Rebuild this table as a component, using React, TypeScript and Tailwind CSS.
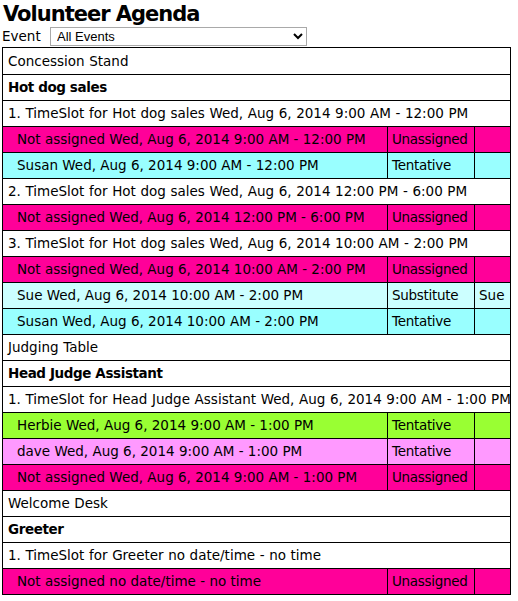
import React from "react";

type Row =
  | { kind: "event"; text: string }
  | { kind: "role"; text: string }
  | { kind: "slot"; text: string }
  | { kind: "assign"; text: string; status: string; sub?: string; bg: string };

const rows: Row[] = [
  { kind: "event", text: "Concession Stand" },
  { kind: "role", text: "Hot dog sales" },
  { kind: "slot", text: "1. TimeSlot for Hot dog sales Wed, Aug 6, 2014 9:00 AM - 12:00 PM" },
  { kind: "assign", text: "Not assigned Wed, Aug 6, 2014 9:00 AM - 12:00 PM", status: "Unassigned", bg: "bg-[#ff0099]" },
  { kind: "assign", text: "Susan Wed, Aug 6, 2014 9:00 AM - 12:00 PM", status: "Tentative", bg: "bg-[#99ffff]" },
  { kind: "slot", text: "2. TimeSlot for Hot dog sales Wed, Aug 6, 2014 12:00 PM - 6:00 PM" },
  { kind: "assign", text: "Not assigned Wed, Aug 6, 2014 12:00 PM - 6:00 PM", status: "Unassigned", bg: "bg-[#ff0099]" },
  { kind: "slot", text: "3. TimeSlot for Hot dog sales Wed, Aug 6, 2014 10:00 AM - 2:00 PM" },
  { kind: "assign", text: "Not assigned Wed, Aug 6, 2014 10:00 AM - 2:00 PM", status: "Unassigned", bg: "bg-[#ff0099]" },
  { kind: "assign", text: "Sue Wed, Aug 6, 2014 10:00 AM - 2:00 PM", status: "Substitute", sub: "Sue", bg: "bg-[#ccffff]" },
  { kind: "assign", text: "Susan Wed, Aug 6, 2014 10:00 AM - 2:00 PM", status: "Tentative", bg: "bg-[#99ffff]" },
  { kind: "event", text: "Judging Table" },
  { kind: "role", text: "Head Judge Assistant" },
  { kind: "slot", text: "1. TimeSlot for Head Judge Assistant Wed, Aug 6, 2014 9:00 AM - 1:00 PM" },
  { kind: "assign", text: "Herbie Wed, Aug 6, 2014 9:00 AM - 1:00 PM", status: "Tentative", bg: "bg-[#99ff33]" },
  { kind: "assign", text: "dave Wed, Aug 6, 2014 9:00 AM - 1:00 PM", status: "Tentative", bg: "bg-[#ff99ff]" },
  { kind: "assign", text: "Not assigned Wed, Aug 6, 2014 9:00 AM - 1:00 PM", status: "Unassigned", bg: "bg-[#ff0099]" },
  { kind: "event", text: "Welcome Desk" },
  { kind: "role", text: "Greeter" },
  { kind: "slot", text: "1. TimeSlot for Greeter no date/time - no time" },
  { kind: "assign", text: "Not assigned no date/time - no time", status: "Unassigned", bg: "bg-[#ff0099]" },
];

function AgendaRow({ row, first }: { row: Row; first: boolean }) {
  const top = first ? "" : "border-t border-black";
  if (row.kind === "assign") {
    return (
      <div className={`flex h-[26px] ${top} ${row.bg}`}>
        <div className="w-[384px] pl-[14px] flex items-center whitespace-nowrap">{row.text}</div>
        <div className="w-[87px] border-l border-black pl-[4px] flex items-center text-[13.5px] tracking-[-0.3px]">{row.status}</div>
        <div className="flex-1 border-l border-black pl-[4px] flex items-center">{row.sub ?? ""}</div>
      </div>
    );
  }
  return (
    <div
      className={`h-[26px] pl-[5px] flex items-center bg-white whitespace-nowrap ${top} ${
        row.kind === "role" ? "font-bold text-[13.5px] tracking-[-0.4px]" : "[word-spacing:0.3px]"
      }`}
    >
      {row.text}
    </div>
  );
}

export default function App() {
  return (
    <div className="bg-white min-h-[601px] text-[13.5px] text-black font-['DejaVu_Sans',Verdana,sans-serif] pt-[1px]">
      <h1 className="pl-[3px] text-[21px] tracking-[-1px] font-bold leading-[26px]">Volunteer Agenda</h1>
      <div className="flex items-center h-[19px] pl-[2px]">
        <span className="w-[48px]">Event</span>
        <select className="w-[257px] h-[19px] border border-[#a9a9a9] text-[13px] pl-[2px] font-['Liberation_Sans',Arial,sans-serif] bg-white">
          <option>All Events</option>
        </select>
      </div>
      <div className="ml-[2px] w-[509px] border border-black mt-[1px]">
        {rows.map((r, i) => (
          <AgendaRow key={i} row={r} first={i === 0} />
        ))}
      </div>
    </div>
  );
}
